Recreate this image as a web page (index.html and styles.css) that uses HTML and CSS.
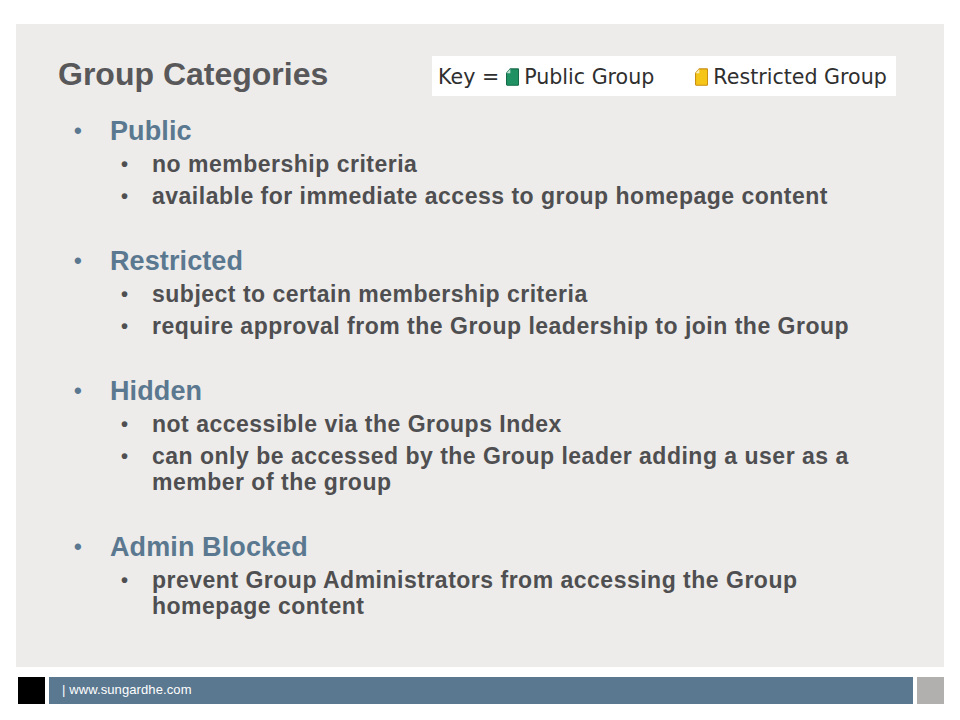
FILE: index.html
```html
<!DOCTYPE html>
<html lang="en">
<head>
<meta charset="utf-8">
<title>Group Categories</title>
<link rel="stylesheet" href="styles.css">
</head>
<body>
<main class="panel">
  <header class="head">
    <h1 class="title">Group Categories</h1>
    <div class="key">
      <span class="key-label">Key =</span>
      <svg class="doc" viewBox="0 0 12 16" aria-hidden="true"><path d="M4 .5H11a.8.8 0 0 1 .6.7V15a.8.8 0 0 1-.7.6H1.200a.8.8 0 0 1-.7-.7V4.500Z" fill="#1f9163" stroke="#156b48"/><path d="M4 .5V4.500H.5Z" fill="#bfe3d2"/></svg>
      <span class="key-public">Public Group</span>
      <svg class="doc" viewBox="0 0 12 16" aria-hidden="true"><path d="M4 .5H11a.8.8 0 0 1 .6.7V15a.8.8 0 0 1-.7.6H1.200a.8.8 0 0 1-.7-.7V4.500Z" fill="#f5c518" stroke="#c98f10"/><path d="M4 .5V4.500H.5Z" fill="#fdf0b8"/></svg>
      <span>Restricted Group</span>
    </div>
  </header>
  <ul class="groups">
    <li class="group">Public
      <ul class="subs">
        <li>no membership criteria</li>
        <li>available for immediate access to group homepage content</li>
      </ul>
    </li>
    <li class="group">Restricted
      <ul class="subs">
        <li>subject to certain membership criteria</li>
        <li>require approval from the Group leadership to join the Group</li>
      </ul>
    </li>
    <li class="group">Hidden
      <ul class="subs">
        <li>not accessible via the Groups Index</li>
        <li>can only be accessed by the Group leader adding a user as a member of the group</li>
      </ul>
    </li>
    <li class="group">Admin Blocked
      <ul class="subs">
        <li>prevent Group Administrators from accessing the Group homepage content</li>
      </ul>
    </li>
  </ul>
</main>
<footer class="foot">
  <div class="foot-black"></div>
  <div class="foot-bar">| www.sungardhe.com</div>
  <div class="foot-gray"></div>
</footer>
</body>
</html>
```
FILE: styles.css
```css
* { box-sizing: border-box; }
html, body { margin: 0; padding: 0; background: #fff; }
body {
  width: 960px;
  height: 720px;
  overflow: hidden;
  padding: 24px 16px 0;
  font-family: "Liberation Sans", Arial, sans-serif;
}
.panel {
  height: 643px;
  background: #edecea;
  padding: 32px 48px 0 42px;
}
.head {
  display: flex;
  justify-content: space-between;
  align-items: flex-start;
  height: 60px;
}
.title {
  margin: 0;
  font-size: 32px;
  line-height: 37px;
  font-weight: bold;
  color: #58585a;
}
.key {
  width: 464px;
  height: 40px;
  background: #fff;
  display: flex;
  align-items: center;
  padding: 1px 0 0 6px;
  font-family: "DejaVu Sans", Verdana, sans-serif;
  font-size: 20.600px;
  color: #2f2f2f;
  white-space: nowrap;
}
.key-label { margin-right: 7px; }
.doc { width: 13px; height: 18px; flex: none; margin-right: 5px; }
.key-public { margin-right: 41px; }
.groups, .subs { list-style: none; margin: 0; padding: 0; }
.group {
  position: relative;
  padding-left: 52px;
  margin-bottom: 37px;
  font-size: 27px;
  letter-spacing: 0.1px;
  line-height: 30px;
  font-weight: bold;
  color: #5a7890;
}
.group::before {
  content: "•";
  position: absolute;
  left: 16px;
  font-size: 22px;
  color: #5a7890;
}
.subs { margin-top: 5px; }
.subs li {
  position: relative;
  padding-left: 42px;
  margin-bottom: 6px;
  font-size: 23px;
  letter-spacing: 0.5px;
  line-height: 26px;
  color: #4f4f51;
}
.subs li::before {
  content: "•";
  position: absolute;
  left: 11px;
  font-size: 20px;
}
.foot {
  display: flex;
  gap: 4px;
  height: 27px;
  margin: 10px 0 0 2px;
}
.foot-black { width: 27px; background: #000; }
.foot-bar {
  width: 864px;
  background: #5a7890;
  color: #fff;
  font-size: 13px;
  letter-spacing: 0.1px;
  line-height: 25px;
  padding-left: 13px;
}
.foot-gray { width: 27px; background: #b2b0ae; }
```
